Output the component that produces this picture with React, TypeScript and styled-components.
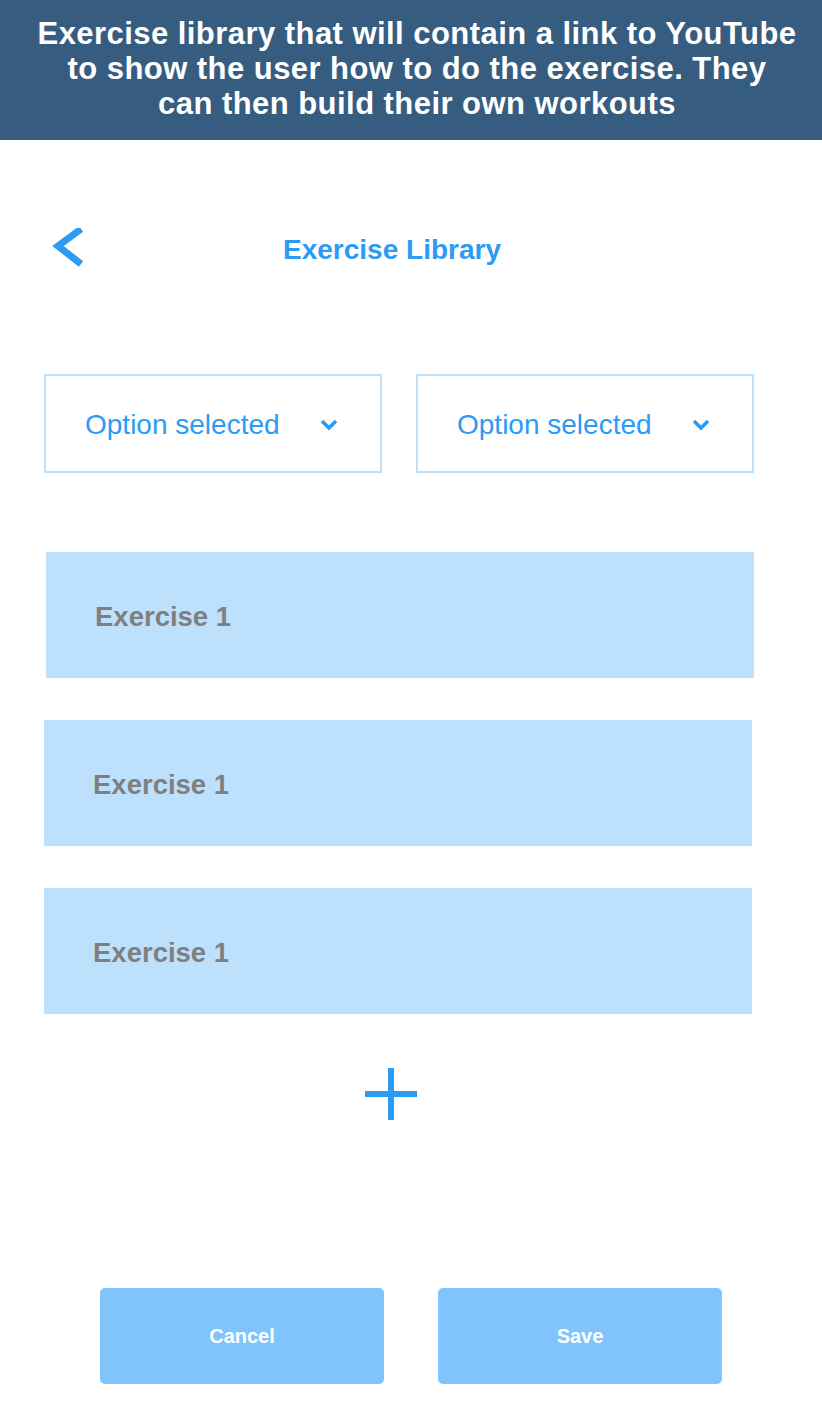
import styled, { createGlobalStyle } from 'styled-components';

const GlobalStyle = createGlobalStyle`
  body {
    margin: 0;
    background: #fff;
    font-family: 'Liberation Sans', Arial, sans-serif;
  }
`;

const Page = styled.div`
  width: 822px;
  min-height: 1424px;
  display: flex;
  flex-direction: column;
`;

const Banner = styled.div`
  height: 140px;
  background: #365d7f;
  color: #fff;
  display: flex;
  align-items: center;
  justify-content: center;
  text-align: center;
  font-weight: 700;
  font-size: 31px;
  line-height: 35px;
  letter-spacing: 0.45px;
  padding: 0 0 3px 12px;
  box-sizing: border-box;
`;

const NavBar = styled.div`
  height: 40px;
  margin-top: 88px;
  position: relative;
  display: flex;
  align-items: center;
  justify-content: center;
`;

const BackButton = styled.button`
  position: absolute;
  left: 50px;
  top: 0;
  border: 0;
  background: none;
  padding: 0;
  width: 40px;
  height: 40px;
  cursor: pointer;
`;

const Title = styled.h1`
  margin: 3px 0 0 -38px;
  font-size: 28px;
  font-weight: 700;
  color: #2b9bf4;
`;

const Filters = styled.div`
  display: flex;
  gap: 34px;
  margin: 106px 0 0 44px;
`;

const Select = styled.div`
  width: 338px;
  height: 99px;
  box-sizing: border-box;
  border: 2px solid #bde0fb;
  display: flex;
  align-items: center;
  padding: 2px 41px 0 39px;
  justify-content: space-between;
  color: #2b9bf4;
  font-size: 28px;
`;

const List = styled.div`
  display: flex;
  flex-direction: column;
  gap: 42px;
  margin: 79px 0 0 44px;
`;

const Card = styled.div<{ $shift?: number }>`
  width: 708px;
  height: 126px;
  background: #bde0fc;
  display: flex;
  align-items: center;
  padding: 3px 0 0 49px;
  box-sizing: border-box;
  margin-left: ${(p) => p.$shift || 0}px;
  color: #7f7f7f;
  font-weight: 700;
  font-size: 27.5px;
`;

const AddButton = styled.button`
  align-self: center;
  margin: 50px 0 0 -40px;
  width: 60px;
  height: 60px;
  border: 0;
  background: none;
  padding: 0;
  cursor: pointer;
`;

const Actions = styled.div`
  display: flex;
  gap: 54px;
  margin: 164px 0 0 100px;
`;

const ActionButton = styled.button`
  width: 284px;
  height: 96px;
  border: 0;
  border-radius: 5px;
  background: #80c4fd;
  color: #fff;
  font-family: 'Liberation Sans', Arial, sans-serif;
  font-weight: 700;
  font-size: 20px;
  padding-top: 2px;
  cursor: pointer;
`;

function Chevron() {
  return (
    <svg width="20" height="14" viewBox="0 0 20 14">
      <path d="M3 3 L10 10 L17 3" fill="none" stroke="#2b9bf4" strokeWidth="3.6" />
    </svg>
  );
}

export default function App() {
  const exercises = ['Exercise 1', 'Exercise 1', 'Exercise 1'];
  return (
    <Page>
      <GlobalStyle />
      <Banner>
        Exercise library that will contain a link to YouTube
        <br />
        to show the user how to do the exercise. They
        <br />
        can then build their own workouts
      </Banner>
      <NavBar>
        <BackButton aria-label="Back">
          <svg width="40" height="40" viewBox="0 0 40 40">
            <path d="M31 1 L8 18 L31 36" fill="none" stroke="#2b9bf4" strokeWidth="7" />
          </svg>
        </BackButton>
        <Title>Exercise Library</Title>
      </NavBar>
      <Filters>
        <Select>
          Option selected
          <Chevron />
        </Select>
        <Select>
          Option selected
          <Chevron />
        </Select>
      </Filters>
      <List>
        {exercises.map((name, i) => (
          <Card key={i} $shift={i === 0 ? 2 : 0}>
            {name}
          </Card>
        ))}
      </List>
      <AddButton aria-label="Add exercise">
        <svg width="60" height="60" viewBox="0 0 60 60">
          <path d="M30 4 V56 M4 30 H56" stroke="#2b9bf4" strokeWidth="6" />
        </svg>
      </AddButton>
      <Actions>
        <ActionButton>Cancel</ActionButton>
        <ActionButton>Save</ActionButton>
      </Actions>
    </Page>
  );
}
